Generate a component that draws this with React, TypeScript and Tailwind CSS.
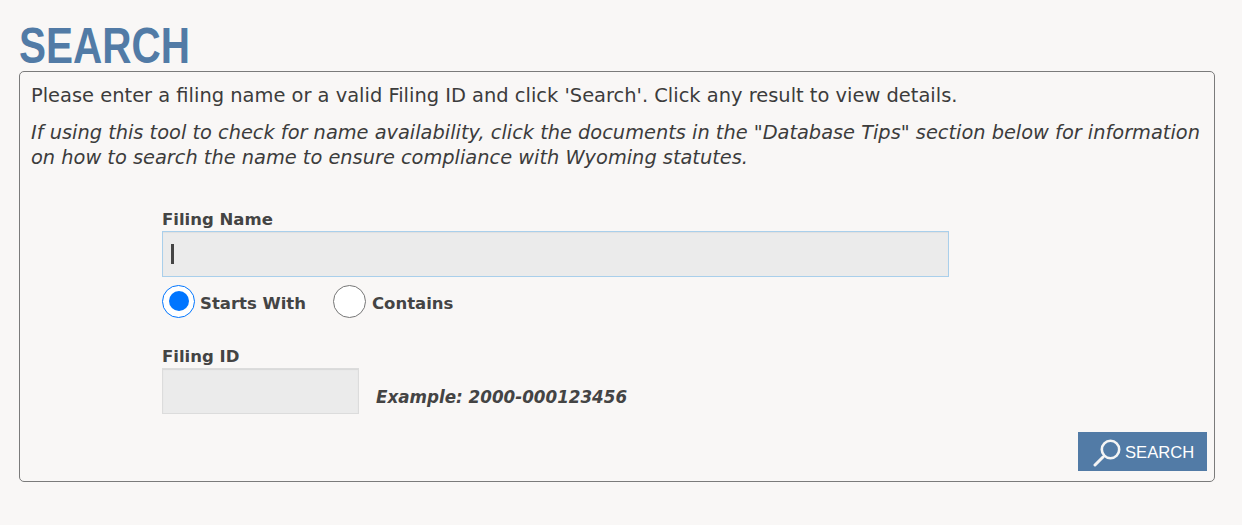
export default function App() {
  return (
    <div className="min-h-[525px] bg-[#f9f7f6] pl-[19px] pr-[27px] pt-[19px] font-['DejaVu_Sans',Verdana,sans-serif] text-[#444444]">
      {/* Page title */}
      <h1 className="h-[52px] font-['Liberation_Sans',Arial,sans-serif] text-[50px] leading-[55px] font-bold text-[#527ba6]">
        <span className="inline-block origin-left scale-x-[0.81]">SEARCH</span>
      </h1>

      <div className="h-[411px] rounded-[5px] border border-[#7b7b7b] px-[11px] pt-[11px]">
        <p className="text-[19.45px] leading-[25px] text-[#3c3c3c]">
          Please enter a filing name or a valid Filing ID and click 'Search'. Click any result to view details.
        </p>
        <p className="mt-[12px] -mr-[8px] text-[19.38px] leading-[25px] text-[#3c3c3c] italic">
          If using this tool to check for name availability, click the documents in the "Database Tips" section below for information on how to search the name to ensure compliance with Wyoming statutes.
        </p>

        <div className="mt-[37px] pl-[131px]">
          <label className="block h-[24px] pt-[1px] text-[16.5px] leading-[24px] font-bold">Filing Name</label>
          <div className="flex h-[46px] w-[787px] items-center border border-[#a9cfeb] bg-[#ebebeb] pl-[8px] shadow-[inset_0_1px_1px_rgba(0,0,0,0.05)]">
            <span className="h-[20px] w-[3px] bg-[#444444]" />
          </div>

          <div className="mt-[7px] flex h-[34px] items-center">
            <span className="flex h-[33px] w-[33px] items-center justify-center rounded-full border-[1.5px] border-[#0075ff] bg-white">
              <span className="h-[20px] w-[20px] rounded-full bg-[#0075ff]" />
            </span>
            <span className="ml-[5px] pt-[7px] text-[16.5px] font-bold">Starts With</span>
            <span className="ml-[27px] h-[33px] w-[33px] rounded-full border-[1.5px] border-[#767676] bg-white" />
            <span className="ml-[6px] pt-[7px] text-[16.5px] font-bold">Contains</span>
          </div>

          <label className="mt-[26px] block h-[24px] pt-[1px] text-[16.5px] leading-[24px] font-bold">Filing ID</label>
          <div className="flex items-end">
            <div className="h-[46px] w-[197px] border border-[#dcdcdc] bg-[#ebebeb] shadow-[inset_0_1px_1px_rgba(0,0,0,0.08)]" />
            <span className="mb-[7px] ml-[17px] text-[16.75px] leading-[20px] font-bold italic">Example: 2000-000123456</span>
          </div>
        </div>

        <div className="mt-[18px] flex justify-end">
          <button className="-mr-[4px] flex h-[39px] w-[129px] items-center bg-[#527ba6] pl-[15px] font-['Liberation_Sans',Arial,sans-serif] text-[16.6px] text-white">
            <svg width="30" height="30" viewBox="0 0 30 30" fill="none" stroke="#f4f4f4" strokeLinecap="round">
              <circle cx="17.5" cy="12.5" r="8.7" strokeWidth="2.6" />
              <path d="M10 20 L2 28" strokeWidth="3" />
            </svg>
            <span className="ml-[2px] pt-[3px]">SEARCH</span>
          </button>
        </div>
      </div>
    </div>
  );
}
